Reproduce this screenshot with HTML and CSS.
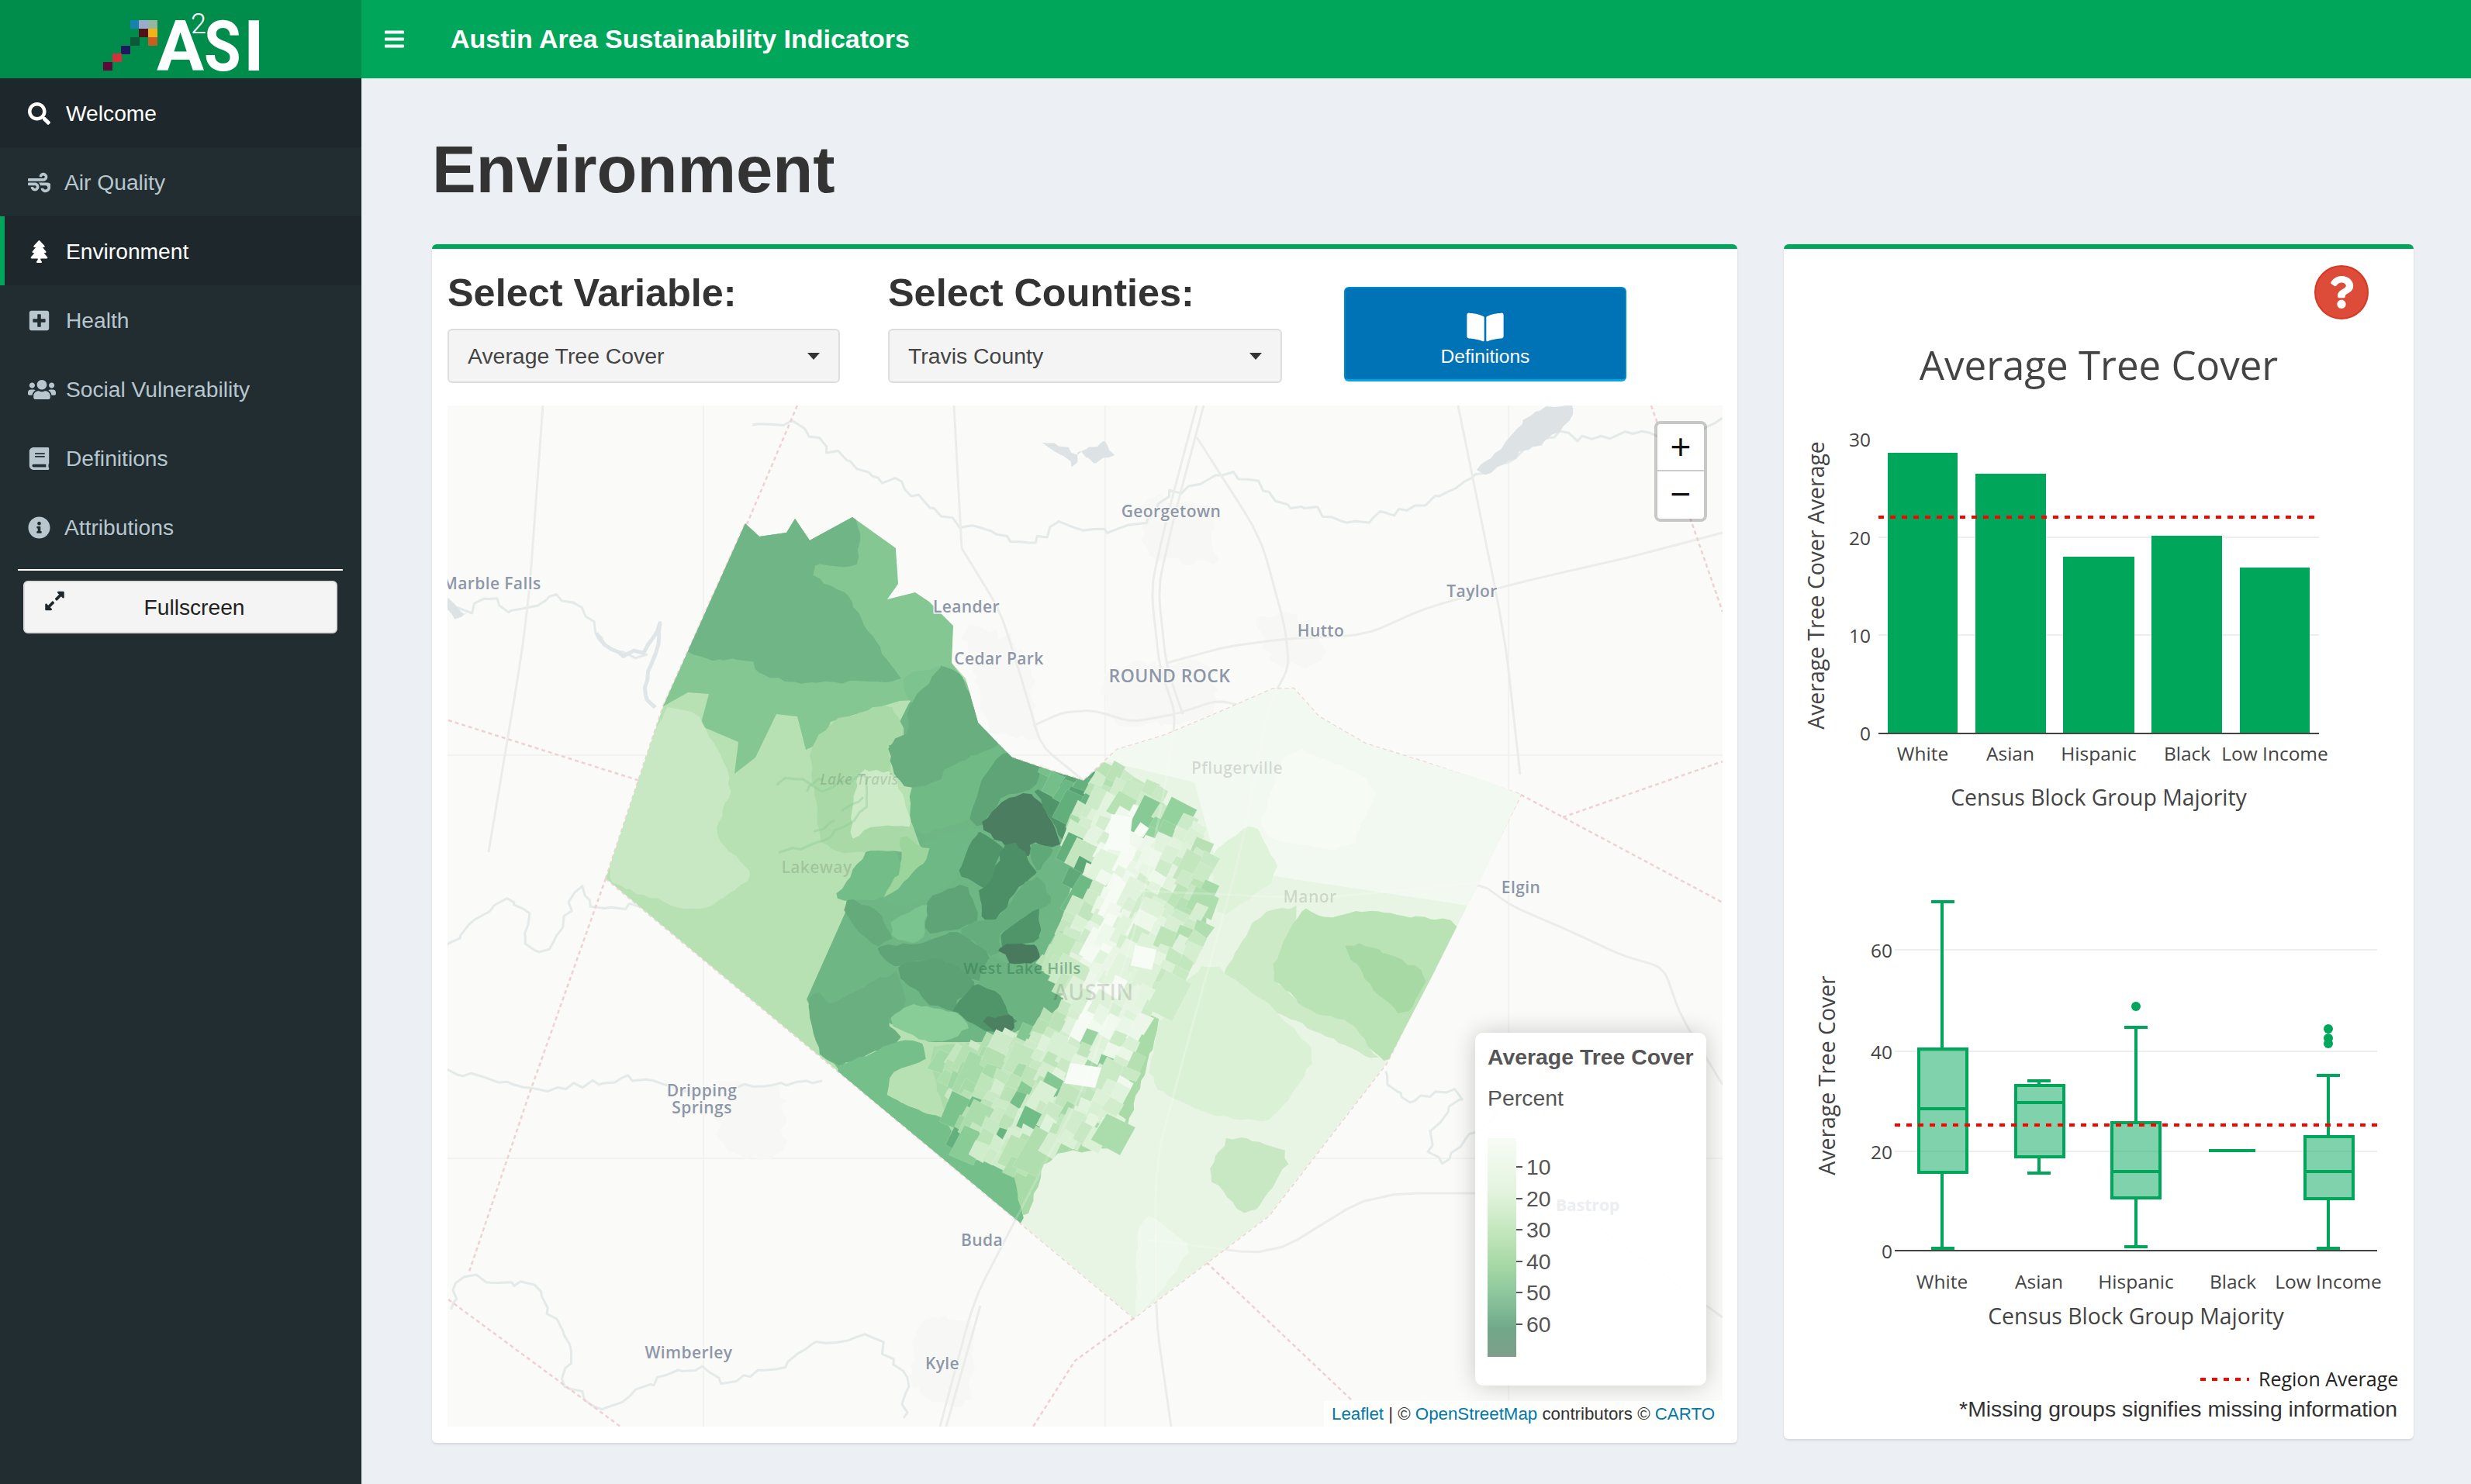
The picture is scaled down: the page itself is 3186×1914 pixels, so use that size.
FILE: index.html
```html
<!DOCTYPE html>
<html lang="en">
<head>
    <meta charset="UTF-8">
    <meta name="viewport" content="width=device-width, initial-scale=1.0">
    <title>Austin Area Sustainability Indicators</title>
    <link rel="stylesheet" href="styles.css">
</head>
<body>
    <div class="app">
        <a class="logo" href="#">
            <svg class="logo-art" viewBox="0 0 466 101">
                <rect x="168" y="26" width="12" height="11" fill="#1583ab"/>
                <rect x="179" y="26" width="12" height="11" fill="#9aaccd"/>
                <rect x="191" y="26" width="12" height="11" fill="#95b6a0"/>
                <rect x="179" y="37" width="12" height="11" fill="#4e1414"/>
                <rect x="191" y="37" width="12" height="11" fill="#f3b11a"/>
                <rect x="168" y="48" width="12" height="11" fill="#0d5a3a"/>
                <rect x="191" y="48" width="12" height="11" fill="#c85e22"/>
                <rect x="156" y="59" width="12" height="11" fill="#1c1a5c"/>
                <rect x="145" y="69" width="12" height="11" fill="#d5313a"/>
                <rect x="133" y="80" width="12" height="11" fill="#5c0a3c"/>
                <text class="logo-letter" x="202" y="91">A</text>
                <text class="logo-letter" transform="translate(263 91) scale(0.85 1)">S</text>
                <text class="logo-letter" x="314" y="91">I</text>
                <text class="logo-two" x="246" y="43">2</text>
            </svg>
        </a>
        <header class="navbar">
            <svg class="nav-toggle" viewBox="0 0 448 512"><path d="M16 132h416c8.837 0 16-7.163 16-16V76c0-8.837-7.163-16-16-16H16C7.163 60 0 67.163 0 76v40c0 8.837 7.163 16 16 16zm0 160h416c8.837 0 16-7.163 16-16v-40c0-8.837-7.163-16-16-16H16c-8.837 0-16 7.163-16 16v40c0 8.837 7.163 16 16 16zm0 160h416c8.837 0 16-7.163 16-16v-40c0-8.837-7.163-16-16-16H16c-8.837 0-16 7.163-16 16v40c0 8.837 7.163 16 16 16z"/></svg>
            <span class="nav-title">Austin Area Sustainability Indicators</span>
        </header>

        <aside class="sidebar">
            <ul class="menu">
                <li class="menu-item is-hover">
                    <svg class="menu-icon" viewBox="0 0 512 512"><path d="M505 442.7L405.3 343c-4.5-4.5-10.6-7-17-7H372c27.6-35.3 44-79.7 44-128C416 93.1 322.9 0 208 0S0 93.1 0 208s93.1 208 208 208c48.3 0 92.7-16.4 128-44v16.3c0 6.4 2.5 12.5 7 17l99.7 99.7c9.4 9.4 24.6 9.4 33.9 0l28.3-28.3c9.4-9.4 9.4-24.6.1-34zM208 336c-70.7 0-128-57.2-128-128 0-70.7 57.2-128 128-128 70.7 0 128 57.2 128 128 0 70.7-57.2 128-128 128z"/></svg>
                    Welcome
                </li>
                <li class="menu-item">
                    <svg class="menu-icon menu-icon-tight" viewBox="0 0 512 512"><path d="M156.7 256H16c-8.800 0-16 7.200-16 16v32c0 8.800 7.200 16 16 16h142.200c15.900 0 30.800 10.900 33.400 26.600 3.300 20-12.100 37.400-31.600 37.400-14.100 0-26.100-9.200-30.400-21.900-2.100-6.300-8.600-10.100-15.200-10.100H81.600c-9.800 0-17.700 8.800-15.900 18.400 8.600 44.100 47.600 77.600 94.200 77.600 57.100 0 102.700-50.100 95.200-108.600C249 291 205.400 256 156.700 256zM16 224h336c59.700 0 106.800-54.800 93.800-116.700-7.600-36.200-36.900-65.500-73.100-73.100-55.400-11.600-105.100 24.900-114.900 75.500-1.900 9.600 6.100 18.300 15.800 18.300h32.800c6.700 0 13.100-3.800 15.200-10.100C325.900 105.200 337.900 96 352 96c19.400 0 34.900 17.400 31.600 37.400-2.600 15.700-17.400 26.600-33.400 26.600H16c-8.800 0-16 7.200-16 16v32c0 8.800 7.200 16 16 16zm384 32H243.700c19.300 16.600 33.200 38.800 39.800 64H400c26.500 0 48 21.500 48 48s-21.500 48-48 48c-17.900 0-33.300-9.900-41.600-24.400-2.900-5-8.700-7.600-14.500-7.600h-33.800c-10.900 0-19 10.800-15.300 21.100 17.800 50.600 70.500 84.800 129.400 72.300 41.200-8.700 75.100-41.600 84.700-82.700C560.100 271.900 490.500 256 400 256z"/></svg>
                    Air Quality
                </li>
                <li class="menu-item is-active">
                    <svg class="menu-icon" viewBox="0 0 384 512"><path d="M378.310 378.490L298.420 288h30.630c9.010 0 16.980-5 20.780-13.060 3.800-8.040 2.550-17.260-3.280-24.050L268.420 160h28.890c9.100 0 17.300-5.350 20.860-13.610 3.520-8.130 1.860-17.590-4.240-24.080L203.660 4.830c-6.030-6.450-17.280-6.450-23.320 0L70.060 122.310c-6.100 6.490-7.750 15.950-4.240 24.080C69.390 154.650 77.590 160 86.690 160h28.890l-78.140 90.910c-5.810 6.780-7.060 15.990-3.270 24.040C37.970 283 45.930 288 54.950 288h30.630L5.690 378.490c-6 6.790-7.360 16.090-3.560 24.260 3.750 8.050 12 13.250 21.010 13.250H160v24.450l-30.290 48.400c-5.320 10.640 2.420 23.160 14.310 23.160h95.960c11.890 0 19.630-12.520 14.310-23.160L224 440.450V416h136.860c9.010 0 17.260-5.200 21.010-13.250 3.800-8.170 2.440-17.470-3.560-24.260z"/></svg>
                    Environment
                </li>
                <li class="menu-item">
                    <svg class="menu-icon" viewBox="0 0 448 512"><path d="M400 32H48C21.500 32 0 53.500 0 80v352c0 26.500 21.500 48 48 48h352c26.500 0 48-21.500 48-48V80c0-26.500-21.500-48-48-48zm-32 252c0 6.600-5.400 12-12 12h-92v92c0 6.600-5.400 12-12 12h-56c-6.600 0-12-5.400-12-12v-92H92c-6.600 0-12-5.400-12-12v-56c0-6.600 5.400-12 12-12h92v-92c0-6.600 5.400-12 12-12h56c6.600 0 12 5.400 12 12v92h92c6.600 0 12 5.400 12 12v56z"/></svg>
                    Health
                </li>
                <li class="menu-item">
                    <svg class="menu-icon menu-icon-wide" viewBox="0 0 640 512"><path d="M96 224c35.300 0 64-28.700 64-64s-28.700-64-64-64-64 28.700-64 64 28.700 64 64 64zm448 0c35.300 0 64-28.700 64-64s-28.700-64-64-64-64 28.700-64 64 28.700 64 64 64zm32 32h-64c-17.600 0-33.500 7.100-45.100 18.600 40.300 22.100 68.900 62 75.100 109.400h66c17.700 0 32-14.300 32-32v-32c0-35.300-28.700-64-64-64zm-256 0c61.900 0 112-50.100 112-112S381.900 32 320 32 208 82.100 208 144s50.100 112 112 112zm76.800 32h-8.300c-20.800 10-43.900 16-68.500 16s-47.600-6-68.500-16h-8.300C179.600 288 128 339.600 128 403.200V432c0 26.500 21.500 48 48 48h288c26.500 0 48-21.500 48-48v-28.800c0-63.600-51.600-115.200-115.200-115.200zm-223.700-13.400C161.500 263.100 145.600 256 128 256H64c-35.300 0-64 28.700-64 64v32c0 17.700 14.300 32 32 32h65.900c6.300-47.400 34.900-87.300 75.200-109.400z"/></svg>
                    Social Vulnerability
                </li>
                <li class="menu-item">
                    <svg class="menu-icon" viewBox="0 0 448 512"><path d="M448 360V24c0-13.300-10.700-24-24-24H96C43 0 0 43 0 96v320c0 53 43 96 96 96h328c13.300 0 24-10.700 24-24v-16c0-7.500-3.500-14.300-8.900-18.700-4.200-15.400-4.200-59.300 0-74.700 5.400-4.300 8.900-11.100 8.900-18.600zM128 134c0-3.300 2.700-6 6-6h212c3.300 0 6 2.700 6 6v20c0 3.300-2.700 6-6 6H134c-3.300 0-6-2.700-6-6v-20zm0 64c0-3.300 2.700-6 6-6h212c3.300 0 6 2.700 6 6v20c0 3.300-2.700 6-6 6H134c-3.300 0-6-2.700-6-6v-20zm253.400 250H96c-17.700 0-32-14.300-32-32 0-17.600 14.400-32 32-32h285.400c-1.900 17.100-1.900 46.900 0 64z"/></svg>
                    Definitions
                </li>
                <li class="menu-item">
                    <svg class="menu-icon menu-icon-tight" viewBox="0 0 512 512"><path d="M256 8C119.043 8 8 119.083 8 256c0 136.997 111.043 248 248 248s248-111.003 248-248C504 119.083 392.957 8 256 8zm0 110c23.196 0 42 18.804 42 42s-18.804 42-42 42-42-18.804-42-42 18.804-42 42-42zm56 254c0 6.627-5.373 12-12 12h-88c-6.627 0-12-5.373-12-12v-24c0-6.627 5.373-12 12-12h12v-64h-12c-6.627 0-12-5.373-12-12v-24c0-6.627 5.373-12 12-12h64c6.627 0 12 5.373 12 12v100h12c6.627 0 12 5.373 12 12v24z"/></svg>
                    Attributions
                </li>
            </ul>
            <hr class="side-rule">
            <button class="fullscreen-btn" type="button">
                <svg class="fullscreen-icon" viewBox="0 0 448 512"><path d="M212.686 315.314L120 408l32.922 31.029c15.120 15.120 4.412 40.971-16.970 40.971h-112C10.697 480 0 469.255 0 456V344c0-21.382 25.803-32.090 40.922-16.971L72 360l92.686-92.686c6.248-6.248 16.379-6.248 22.627 0l25.373 25.373c6.249 6.248 6.249 16.378 0 22.627zm22.628-118.628L328 104l-32.922-31.029C279.958 57.851 290.666 32 312.048 32h112C437.303 32 448 42.745 448 56v112c0 21.382-25.803 32.090-40.922 16.971L376 152l-92.686 92.686c-6.248 6.248-16.379 6.248-22.627 0l-25.373-25.373c-6.249-6.248-6.249-16.378 0-22.627z"/></svg>
                <span class="fullscreen-label">Fullscreen</span>
            </button>
        </aside>

        <main class="content">
            <h1 class="page-title">Environment</h1>
            <div class="cards">
                <section class="card map-card">
                    <div class="controls">
                        <div class="control">
                            <h2 class="control-title">Select Variable:</h2>
                            <div class="select-box">Average Tree Cover</div>
                        </div>
                        <div class="control">
                            <h2 class="control-title">Select Counties:</h2>
                            <div class="select-box">Travis County</div>
                        </div>
                        <button class="definitions-btn" type="button">
                            <svg class="definitions-icon" viewBox="0 0 576 512"><path d="M542.220 32.050c-54.800 3.110-163.720 14.430-230.960 55.590-4.640 2.840-7.270 7.890-7.270 13.170v363.870c0 11.550 12.630 18.850 23.280 13.490 69.180-34.820 169.230-44.320 218.700-46.920 16.890-.89 30.020-14.430 30.020-30.660V62.750c.01-17.710-15.350-31.740-33.770-30.700zM264.730 87.640C197.500 46.480 88.580 35.170 33.780 32.050 15.360 31.010 0 45.040 0 62.750V400.600c0 16.240 13.130 29.780 30.020 30.660 49.490 2.600 149.590 12.110 218.770 46.950 10.620 5.350 23.210-1.940 23.210-13.460V100.630c0-5.290-2.620-10.130-7.270-12.990z"/></svg>
                            Definitions
                        </button>
                    </div>

                    <div class="map">
                        <svg class="map-canvas" viewBox="577 524 1644 1317">
                            <defs>
                                <clipPath id="county-clip">
                                    <polygon points="961,676 979,693 1014,688 1025,670 1044,698 1099,668 1155,708 1158,754 1144,774 1180,765 1198,777 1229,808 1227,856 1245,876 1261,933 1288,961 1305,978 1340,990 1397,1008 1415,992 1440,968 1500,950 1560,925 1640,890 1668,889 1700,925 1760,960 1840,985 1920,1010 1961,1026 1907,1139 1847,1259 1788,1372 1636,1569 1462,1701 1308,1572 781,1134 855,912"/>
                                </clipPath>
                            </defs>

                            <!-- tile seams -->
                            <g class="tile-seam">
                                <path d="M907 524V1841M1425 524V1841M1945 524V1841M577 975H2221M577 1495H2221"/>
                            </g>

                            <!-- built up areas -->
                            <g class="town" data-rough="6">
                                <polygon points="1240,800 1320,830 1345,960 1270,940"/>
                                <polygon points="1470,640 1560,650 1570,730 1480,720"/>
                                <polygon points="1420,860 1560,850 1570,930 1430,940"/>
                                <polygon points="1620,790 1700,800 1710,860 1640,860"/>
                                <polygon points="920,1400 1010,1400 1010,1500 930,1490"/>
                                <polygon points="1180,1700 1260,1700 1250,1820 1175,1800"/>
                                <polygon points="2040,1420 2120,1420 2110,1500 2050,1490"/>
                            </g>

                            <!-- water -->
                            <g class="river" data-wiggle="5">
                                <path d="M974 545L1028 545 1060 575 1126 616 1165 625 1191 647 1245 682 1280 685 1321 703 1342 692 1364 675 1400 688 1473 680 1490 655 1505 637 1540 628 1581 611 1625 626 1650 650 1690 657 1730 672 1766 670 1800 660 1841 647 1880 625 1917 606 1950 596 2000 560 2060 570 2110 555 2160 570 2221 540"/>
                                <path d="M578 785L600 790 627 772 645 775 659 792 690 785 713 767 740 775 757 790 768 820 800 846 835 845"/>
                                <path d="M578 1225L610 1190 630 1170 648 1160 670 1170 686 1186 670 1217 703 1233 725 1190 746 1144 760 1170 773 1175 822 1170 850 1190"/>
                                <path d="M578 1385L638 1390 681 1411 750 1400 822 1390 870 1405 909 1411 980 1400 1060 1395"/>
                                <path d="M578 1688L590 1660 605 1646 650 1660 692 1657 710 1700 741 1740 724 1782 760 1810 789 1819 830 1790 865 1772 900 1765 940 1785 974 1772 1005 1770 1028 1745 1075 1730 1126 1719 1145 1750 1169 1782 1165 1830"/>
                                <path d="M1787 1385L1800 1410 1820 1426 1860 1405 1885 1416 1850 1450 1841 1484 1860 1500 1890 1470 1940 1430"/>
                            </g>
                            <g class="lake" data-rough="3">
                                <polygon points="1342,572 1362,582 1383,602 1392,596 1390,584 1404,590 1412,598 1436,590 1432,578 1424,570 1416,575 1404,578 1385,586 1365,574"/>
                                <polygon points="2000,524 2032,524 2022,545 1992,572 1972,578 1950,592 1915,612 1905,604 1935,582 1958,552 1975,534"/>
                                <polygon points="578,770 596,792 606,784 590,800 578,790"/>
                            </g>
                            <g class="lake-arm" data-wiggle="3">
                                <path d="M768 820L800 846 835 840 852 800 846 840 835 860 832 905 845 910"/>
                            </g>

                            <!-- roads -->
                            <g class="road" data-smooth="2">
                                <path d="M1543 524L1505 667 1484 759 1495 861 1516 922 1505 1000 1470 1180 1400 1400 1310 1573 1256 1677 1212 1841"/>
                                <path d="M1552 524L1514 667 1493 759 1504 861 1525 922"/>
                                <path d="M1264 1685L1220 1841"/>
                                <path d="M1543 565L1625 693 1657 810 1662 861 1635 912 1600 1100 1530 1350 1490 1500 1490 1700 1510 1841"/>
                                <path d="M1240 708L1290 790 1320 886 1342 963 1400 1010"/>
                                <path d="M1332 937L1370 920 1408 917 1460 932 1516 922 1570 904 1625 917"/>
                                <path d="M1505 856L1581 835 1657 825 1760 820 1841 784 1972 749 2100 720 2221 688"/>
                                <path d="M1470 1150L1700 1160 1907 1139 1950 1170 2020 1200 2091 1233 2145 1249 2167 1311 2221 1400"/>
                                <path d="M1230 524L1240 708"/>
                                <path d="M700 524L680 800 630 1100"/>
                                <path d="M1880 524L1940 820 1960 1000"/>
                                <path d="M1480 1600L1640 1620 1770 1540 2000 1540 2221 1700"/>
                            </g>

                            <!-- county lines -->
                            <g class="county-line">
                                <path d="M1028 524L963 677"/>
                                <path d="M781 1134L681 1416 605 1641"/>
                                <path d="M578 930L844 1014"/>
                                <path d="M2129 524L2221 790"/>
                                <path d="M2015 1055L2221 983"/>
                                <path d="M1961 1026L2221 1165"/>
                                <path d="M578 1677L800 1841"/>
                                <path d="M1549 1623L1744 1808"/>
                                <path d="M1462 1701L1386 1756 1332 1841"/>
                                <path d="M781 1134L855 912 961 676"/>
                                <path d="M781 1134L1308 1572 1462 1701 1636 1569 1788 1372 1961 1026"/>
                                <path d="M1305 978L1340 990 1397 1008 1440 968 1500 950 1560 925 1640 890 1668 889 1700 925 1760 960 1840 985 1961 1026"/>
                            </g>

                            <!-- tree cover by block group -->
                            <g clip-path="url(#county-clip)">
                                <rect x="577" y="524" width="1644" height="1317" fill="#e8f5e4"/>
                                <polygon fill="#f2f9f0" points="1290,950 1660,860 1980,1000 1900,1170 1570,1120 1540,1010"/>
                                <polygon fill="#b7e0b3" points="781,1134 855,912 961,676 1099,668 1397,979 1440,1200 1380,1400 1308,1572"/>
                                <polygon fill="#85c792" points="950,670 1105,660 1155,708 1158,754 1144,774 1180,765 1198,777 1229,808 1227,856 1260,900 1160,905 1071,932 1061,958 1039,968 1028,925 1001,922 974,978 947,999 952,958 903,937 914,896 887,894 850,915"/>
                                <polygon fill="#6eb684" points="1145,962 1172,908 1214,859 1262,921 1345,985 1380,1060 1385,1130 1368,1190 1345,1240 1375,1290 1340,1320 1300,1345 1200,1345 1143,1319 1085,1377 1040,1290 1089,1180 1116,1100 1170,1080 1190,1040"/>
                            </g>
                            <g id="blocks" clip-path="url(#county-clip)" data-rough="2">
                                <polygon fill="#f6fbf4" points="1660,960 1780,1010 1740,1100 1620,1080"/>
                                <polygon fill="#dff2da" points="1560,1100 1620,1060 1650,1130 1570,1190"/>
                                <polygon fill="#c8e8c3" points="770,1134 855,912 900,920 945,1010 920,1080 975,1130 900,1180"/>
                                <polygon fill="#6fb585" points="950,670 979,688 1014,684 1025,660 1044,694 1099,660 1109,693 1104,734 1050,728 1050,744 1093,769 1120,815 1147,856 1164,879 1061,881 1017,881 979,871 968,853 909,851 880,841"/>
                                <polygon fill="#a8d9a6" points="1071,932 1147,907 1164,938 1169,958 1142,963 1153,1014 1180,1070 1190,1100 1060,1100 1050,1014 1044,968"/>
                                <polygon fill="#cdeac7" points="1107,993 1152,997 1179,1069 1129,1064 1094,1087"/>
                                <polygon fill="#7dc38f" points="1172,870 1214,859 1245,876 1205,900 1172,908 1164,880"/>
                                <polygon fill="#68ae7e" points="1145,962 1172,944 1172,908 1201,877 1214,859 1241,872 1262,921 1292,961 1219,993 1214,1006 1170,1020 1152,997"/>
                                <polygon fill="#6fba85" points="1288,961 1295,968 1263,1051 1250,1060 1179,1078 1170,1020 1214,1006 1219,993"/>
                                <polygon fill="#5ea476" points="1295,968 1345,985 1335,1020 1295,1026 1263,1069 1250,1055 1268,1002"/>
                                <polygon fill="#4b7d60" points="1263,1069 1295,1029 1335,1024 1370,1087 1353,1093 1330,1087 1328,1109 1295,1091"/>
                                <polygon fill="#4f9569" points="1335,1024 1337,1020 1373,1037 1373,1082 1370,1087"/>
                                <polygon fill="#4f9569" points="1257,1073 1295,1091 1286,1113 1279,1136 1268,1147 1234,1127 1241,1109"/>
                                <polygon fill="#4c8f66" points="1295,1091 1313,1089 1328,1113 1339,1127 1319,1140 1286,1185 1268,1187 1261,1154 1279,1136 1286,1113"/>
                                <polygon fill="#5fa979" points="1328,1087 1353,1093 1357,1098 1339,1127 1328,1113"/>
                                <polygon fill="#6db885" points="1248,1069 1263,1069 1234,1127 1234,1136 1179,1171 1152,1167 1136,1162 1147,1140 1201,1096 1185,1089"/>
                                <polygon fill="#9bd59b" points="1161,1078 1203,1100 1152,1154 1136,1158 1147,1140 1163,1113"/>
                                <polygon fill="#73bd88" points="1116,1100 1158,1100 1161,1122 1136,1162 1080,1162 1080,1154"/>
                                <polygon fill="#64aa7b" points="1092,1158 1134,1176 1152,1212 1129,1221 1112,1207 1089,1180"/>
                                <polygon fill="#7ac48f" points="1147,1189 1196,1163 1192,1207 1183,1218 1152,1212"/>
                                <polygon fill="#5ea476" points="1196,1158 1246,1140 1263,1185 1250,1194 1234,1200 1192,1207"/>
                                <polygon fill="#65ad7d" points="1263,1187 1286,1185 1321,1140 1339,1131 1357,1162 1339,1176 1290,1203 1290,1229 1277,1234 1234,1200"/>
                                <polygon fill="#4f9569" points="1290,1205 1319,1185 1341,1171 1341,1216 1290,1223"/>
                                <polygon fill="#6fb885" points="1341,1180 1366,1194 1357,1225 1341,1234"/>
                                <polygon fill="#5ea476" points="1129,1221 1183,1218 1234,1200 1277,1234 1259,1270 1210,1234 1156,1247 1143,1240"/>
                                <polygon fill="#6cb382" points="1277,1234 1304,1245 1326,1245 1341,1234 1365,1245 1375,1290 1340,1320 1312,1319 1286,1283 1259,1270"/>
                                <polygon fill="#4a7a5e" points="1288,1225 1299,1218 1321,1220 1335,1218 1341,1234 1326,1245 1304,1245 1295,1232"/>
                                <polygon fill="#5ba173" points="1156,1247 1210,1234 1241,1252 1259,1270 1232,1296 1228,1305 1196,1296 1183,1279 1161,1265"/>
                                <polygon fill="#4f9569" points="1232,1296 1259,1270 1286,1283 1304,1310 1312,1319 1286,1334 1268,1328 1228,1305"/>
                                <polygon fill="#4c8060" points="1268,1314 1304,1310 1310,1323 1295,1337 1277,1330"/>
                                <polygon fill="#69af7f" points="1040,1290 1056,1279 1068,1296 1080,1290 1098,1282 1110,1276 1134,1261 1147,1261 1156,1252 1170,1296 1143,1319 1163,1343 1085,1377 1060,1363 1049,1341"/>
                                <polygon fill="#88cd97" points="1170,1296 1228,1305 1250,1323 1232,1341 1192,1346 1143,1319"/>
                                <polygon fill="#74bf8a" points="1070,1381 1161,1343 1192,1346 1192,1368 1147,1386 1143,1417 1237,1453 1246,1515 1134,1430"/>
                                <polygon fill="#74bf8a" points="1050,1350 1085,1377 1143,1417 1237,1453 1300,1480 1322,1580 1290,1580"/>
                                <polygon fill="#a9dba8" points="1190,1350 1280,1345 1340,1320 1400,1280 1500,1270 1490,1340 1445,1480 1350,1490 1322,1580 1300,1490 1240,1500"/>
                                <polygon fill="#a9dba8" points="1522,1127 1554,1087 1558,1176 1547,1225 1504,1189 1513,1154"/>
                                <polygon fill="#cdeac7" points="1570,1270 1625,1176 1679,1170 1635,1259 1690,1306 1744,1317 1782,1374 1679,1322 1625,1301"/>
                                <polygon fill="#b9e2b5" points="1635,1259 1679,1170 1711,1186 1755,1176 1890,1190 1855,1259 1790,1380 1739,1317 1690,1306"/>
                                <polygon fill="#a7d9a5" points="1733,1223 1755,1217 1845,1257 1810,1315 1766,1270"/>
                                <polygon fill="#dbf1d6" points="1500,1290 1560,1240 1640,1300 1700,1360 1640,1450 1560,1440 1480,1400"/>
                                <polygon fill="#c8e8c3" points="1587,1463 1668,1489 1612,1575 1554,1515"/>
                                <polygon fill="#eff8ec" points="1470,1560 1540,1610 1500,1660 1462,1710"/>
                            </g>
                            <g class="lake-fingers" clip-path="url(#county-clip)" data-wiggle="3">
                                <path d="M1000 1010L1030 1004 1060 1022 1090 1010 1118 1000 1120 1040 1085 1070 1050 1090 1005 1100"/>
                                <path d="M1040 1020L1060 1006"/>
                                <path d="M1085 1045L1112 1030"/>
                                <path d="M1050 1075L1075 1060"/>
                            </g>
                            <g id="mosaic" clip-path="url(#county-clip)"></g>

                            <!-- roads seen through the fill -->
                            <g class="road-over" clip-path="url(#county-clip)" data-smooth="2">
                                <path d="M1516 922L1505 1000 1470 1180 1400 1400 1310 1573"/>
                                <path d="M1662 861L1635 912 1600 1100 1530 1350 1490 1500 1490 1700"/>
                                <path d="M1470 1150L1700 1160 1907 1139"/>
                                <path d="M1480 1600L1640 1620 1770 1540"/>
                            </g>

                            <!-- place names -->
                            <text class="place" x="1510" y="668">Georgetown</text>
                            <text class="place" x="634" y="761">Marble Falls</text>
                            <text class="place" x="1246" y="791">Leander</text>
                            <text class="place" x="1288" y="858">Cedar Park</text>
                            <text class="place place-big" x="1508" y="881">ROUND ROCK</text>
                            <text class="place" x="1898" y="771">Taylor</text>
                            <text class="place" x="1703" y="822">Hutto</text>
                            <text class="place" x="1961" y="1153">Elgin</text>
                            <text class="place" x="905" y="1415">Dripping</text>
                            <text class="place" x="905" y="1437">Springs</text>
                            <text class="place" x="1266" y="1608">Buda</text>
                            <text class="place" x="888" y="1753">Wimberley</text>
                            <text class="place" x="1215" y="1767">Kyle</text>
                            <text class="place place-over" x="1595" y="999">Pflugerville</text>
                            <text class="place place-over" x="1689" y="1165">Manor</text>
                            <text class="place place-over place-lake" x="1108" y="1013">Lake Travis</text>
                            <text class="place place-over" x="1053" y="1127">Lakeway</text>
                            <text class="place place-hills" x="1318" y="1257">West Lake Hills</text>
                            <text class="place place-city" x="1410" y="1291">AUSTIN</text>
                        </svg>

                        <div class="zoom-control">
                            <span class="zoom-btn">+</span>
                            <span class="zoom-btn">−</span>
                        </div>

                        <div class="legend">
                            <div class="legend-title">Average Tree Cover</div>
                            <div class="legend-unit">Percent</div>
                            <div class="legend-scale">
                                <div class="legend-bar"></div>
                                <ul class="legend-ticks">
                                    <li>10</li>
                                    <li>20</li>
                                    <li>30</li>
                                    <li>40</li>
                                    <li>50</li>
                                    <li>60</li>
                                </ul>
                            </div>
                            <span class="legend-ghost">Bastrop</span>
                        </div>

                        <div class="attribution">
                            <a href="#">Leaflet</a> | © <a href="#">OpenStreetMap</a> contributors © <a href="#">CARTO</a>
                        </div>
                    </div>
                </section>

                <section class="card chart-card">
                    <div class="help-row">
                        <button class="help-btn" type="button">
                            <svg class="help-icon" viewBox="0 0 384 512"><path d="M202.021 0C122.202 0 70.503 32.703 29.914 91.026c-7.363 10.580-5.093 25.086 5.178 32.874l43.138 32.709c10.373 7.865 25.132 6.026 33.253-4.148 25.049-31.381 43.630-49.449 82.757-49.449 30.764 0 68.816 19.799 68.816 49.631 0 22.552-18.617 34.134-48.993 51.164-35.423 19.860-82.299 44.576-82.299 106.405V320c0 13.255 10.745 24 24 24h72.471c13.255 0 24-10.745 24-24v-5.773c0-42.860 125.268-44.645 125.268-160.627C377.504 66.256 286.902 0 202.021 0zM192 373.459c-38.196 0-69.271 31.075-69.271 69.271 0 38.195 31.075 69.270 69.271 69.270s69.271-31.075 69.271-69.271-31.075-69.270-69.271-69.270z"/></svg>
                        </button>
                    </div>

                    <svg class="bar-chart" viewBox="2300 430 812 630">
                        <text class="chart-title" x="2706" y="490">Average Tree Cover</text>
                        <path class="grid" d="M2422 693H2990M2422 819H2990"/>
                        <rect class="bar" x="2434" y="584" width="90" height="362"/>
                        <rect class="bar" x="2547" y="611" width="91" height="335"/>
                        <rect class="bar" x="2660" y="718" width="92" height="228"/>
                        <rect class="bar" x="2774" y="691" width="91" height="255"/>
                        <rect class="bar" x="2888" y="732" width="90" height="214"/>
                        <path class="axis" d="M2422 946H2990"/>
                        <path class="avg" d="M2422 667H2990"/>
                        <text class="tick tick-y" x="2412" y="576">30</text>
                        <text class="tick tick-y" x="2412" y="703">20</text>
                        <text class="tick tick-y" x="2412" y="829">10</text>
                        <text class="tick tick-y" x="2412" y="955">0</text>
                        <text class="tick" x="2479" y="981">White</text>
                        <text class="tick" x="2592" y="981">Asian</text>
                        <text class="tick" x="2706" y="981">Hispanic</text>
                        <text class="tick" x="2820" y="981">Black</text>
                        <text class="tick" x="2933" y="981">Low Income</text>
                        <text class="axis-title" x="2706" y="1039">Census Block Group Majority</text>
                        <text class="axis-title" transform="translate(2352 755) rotate(-90)">Average Tree Cover Average</text>
                    </svg>

                    <svg class="box-chart" viewBox="2300 1130 812 670">
                        <path class="grid" d="M2443 1225H3065M2443 1356H3065M2443 1485H3065"/>
                        <path class="axis" d="M2443 1613H3065"/>

                        <path class="whisker" d="M2504 1163V1353M2504 1512V1610M2490 1163H2520M2490 1610H2520"/>
                        <rect class="box" x="2474" y="1353" width="62" height="159"/>
                        <path class="whisker" d="M2474 1430H2536"/>

                        <path class="whisker" d="M2629 1394V1400M2629 1492V1513M2614 1394H2644M2614 1513H2644"/>
                        <rect class="box" x="2599" y="1400" width="62" height="92"/>
                        <path class="whisker" d="M2599 1422H2661"/>

                        <path class="whisker" d="M2754 1325V1448M2754 1545V1608M2739 1325H2769M2739 1608H2769"/>
                        <rect class="box" x="2723" y="1448" width="62" height="97"/>
                        <path class="whisker" d="M2723 1511H2785"/>
                        <circle class="outlier" cx="2754" cy="1298" r="6"/>

                        <path class="whisker" d="M2848 1484H2908"/>

                        <path class="whisker" d="M3002 1387V1466M3002 1546V1610M2987 1387H3017M2987 1610H3017"/>
                        <rect class="box" x="2972" y="1466" width="62" height="80"/>
                        <path class="whisker" d="M2972 1511H3034"/>
                        <circle class="outlier" cx="3002" cy="1327" r="6"/>
                        <circle class="outlier" cx="3002" cy="1339" r="6"/>
                        <circle class="outlier" cx="3002" cy="1346" r="6"/>

                        <path class="avg" d="M2443 1451H3065"/>

                        <text class="tick tick-y" x="2440" y="1235">60</text>
                        <text class="tick tick-y" x="2440" y="1366">40</text>
                        <text class="tick tick-y" x="2440" y="1495">20</text>
                        <text class="tick tick-y" x="2440" y="1623">0</text>
                        <text class="tick" x="2504" y="1662">White</text>
                        <text class="tick" x="2629" y="1662">Asian</text>
                        <text class="tick" x="2754" y="1662">Hispanic</text>
                        <text class="tick" x="2879" y="1662">Black</text>
                        <text class="tick" x="3002" y="1662">Low Income</text>
                        <text class="axis-title" x="2754" y="1708">Census Block Group Majority</text>
                        <text class="axis-title" transform="translate(2366 1387) rotate(-90)">Average Tree Cover</text>

                        <path class="avg" d="M2837 1779H2900"/>
                        <text class="legend-name" x="2912" y="1788">Region Average</text>
                    </svg>

                    <p class="chart-note">*Missing groups signifies missing information</p>
                </section>
            </div>
        </main>
    </div>
    <script src="map.js"></script>
</body>
</html>
```

FILE: styles.css
```css
* {
    box-sizing: border-box;
}

body {
    margin: 0;
    font-family: "Liberation Sans", Arial, sans-serif;
    background-color: #ecf0f5;
    color: #333;
}

.app {
    display: grid;
    grid-template-columns: 466px 1fr;
    grid-template-rows: 101px 1fr;
    width: 3186px;
    height: 1914px;
    overflow: hidden;
}

/* header */
.logo {
    display: block;
    background-color: #008d4c;
}

.logo-art {
    display: block;
    width: 466px;
    height: 101px;
    overflow: visible;
}

.logo-letter {
    font-family: Roboto, sans-serif;
    font-size: 91px;
    font-weight: 700;
    fill: #fff;
}

.logo-two {
    font-family: Roboto, sans-serif;
    font-size: 36px;
    font-weight: 300;
    fill: #fff;
}

.navbar {
    display: flex;
    align-items: center;
    padding-left: 30px;
    background-color: #00a65a;
    color: #fff;
}

.nav-toggle {
    width: 25px;
    height: 29px;
    fill: #fff;
}

.nav-title {
    margin-left: 60px;
    font-size: 34px;
    font-weight: bold;
}

/* sidebar */
.sidebar {
    background-color: #222d32;
}

.menu {
    list-style: none;
    margin: 0;
    padding: 0;
}

.menu-item {
    display: flex;
    align-items: center;
    gap: 20px;
    height: 89px;
    padding-left: 36px;
    padding-top: 1px;
    font-size: 28.2px;
    color: #b8c7ce;
    fill: #b8c7ce;
}

.menu-item.is-hover {
    background-color: #1e282c;
    color: #fff;
    fill: #fff;
}

.menu-item.is-active {
    background-color: #1e282c;
    border-left: 6px solid #00a65a;
    padding-left: 30px;
    color: #fff;
    fill: #fff;
}

.menu-icon {
    flex: none;
    width: 29px;
    height: 29px;
}

.menu-icon-tight {
    margin-right: -2px;
}

.menu-icon-wide {
    width: 36px;
    margin-right: -7px;
}

.side-rule {
    width: 419px;
    height: 2px;
    margin: 10px 0 13px 23px;
    border: 0;
    background-color: #fff;
}

.fullscreen-btn {
    display: flex;
    align-items: center;
    width: 405px;
    height: 68px;
    margin-left: 30px;
    padding: 1px 15px 0 26px;
    background-color: #f4f4f4;
    border: 2px solid #ddd;
    border-radius: 6px;
    font-family: inherit;
    font-size: 28.2px;
    color: #222;
}

.fullscreen-icon {
    flex: none;
    width: 25px;
    height: 28px;
    margin-top: -18px;
    fill: #1e282c;
}

.fullscreen-label {
    flex: 1;
    text-align: center;
}

/* main area */
.content {
    padding: 0 74px 0 91px;
}

.page-title {
    margin: 0;
    height: 214px;
    padding-top: 53px;
    font-size: 85px;
    line-height: 130px;
    font-weight: bold;
    color: #333;
}

.cards {
    display: grid;
    grid-template-columns: 1683px 812px;
    gap: 60px;
    align-items: start;
}

.card {
    background: #fff;
    border-top: 6px solid #00a65a;
    border-radius: 6px;
    box-shadow: 0 2px 3px rgba(0, 0, 0, 0.1);
}

.map-card {
    height: 1546px;
    padding: 0 20px;
}

.controls {
    display: grid;
    grid-template-columns: 506px 508px 366px;
    column-gap: 62px;
    height: 202px;
}

.control-title {
    margin: 0;
    padding-top: 28px;
    height: 103px;
    font-size: 50.4px;
    line-height: 58px;
    font-weight: bold;
    color: #333;
}

.select-box {
    position: relative;
    height: 70px;
    padding-left: 24px;
    background-color: #f4f4f4;
    border: 2px solid #ddd;
    border-radius: 6px;
    font-size: 28.4px;
    line-height: 66px;
    color: #444;
}

.select-box::after {
    content: "";
    position: absolute;
    right: 24px;
    top: 29px;
    border-left: 8px solid transparent;
    border-right: 8px solid transparent;
    border-top: 9px solid #333;
}

.definitions-btn {
    display: flex;
    flex-direction: column;
    align-items: center;
    justify-content: flex-start;
    gap: 3px;
    width: 364px;
    height: 122px;
    margin: 49px 0 0 18px;
    padding: 29px 0 0;
    background-color: #0073b7;
    border: 2px solid #0089c9;
    border-bottom: 3px solid #00a7e0;
    border-radius: 6px;
    font-family: inherit;
    font-size: 24.6px;
    color: #fff;
}

.definitions-icon {
    width: 48px;
    height: 42px;
    fill: #fff;
}

/* map */
.map {
    position: relative;
    width: 1644px;
    height: 1317px;
    background-color: #fafaf8;
    overflow: hidden;
}

.map-canvas {
    display: block;
    width: 100%;
    height: 100%;
}

.tile-seam path {
    fill: none;
    stroke: #f0f0ee;
    stroke-width: 1.5;
}

.town polygon {
    fill: #f7f7f5;
}

.river path {
    fill: none;
    stroke: #e4e9ea;
    stroke-width: 3;
    stroke-linejoin: round;
}

.lake polygon {
    fill: #dde3e5;
}

.lake-arm path {
    fill: none;
    stroke: #e0e6e8;
    stroke-width: 5;
    stroke-linejoin: round;
}

.lake-fingers path {
    fill: none;
    stroke: #8ccb98;
    stroke-opacity: 0.4;
    stroke-width: 3;
    stroke-linecap: round;
}

.road path {
    fill: none;
    stroke: #ececea;
    stroke-width: 3;
    stroke-linejoin: round;
}

.road-over path {
    fill: none;
    stroke: #fff;
    stroke-opacity: 0.2;
    stroke-width: 3;
    stroke-linejoin: round;
}

.county-line path {
    fill: none;
    stroke: #eed2d1;
    stroke-width: 2.5;
    stroke-dasharray: 5 4;
}

#mosaic polygon {
    stroke-width: 0.6;
    stroke: rgba(255, 255, 255, 0.25);
}

.place {
    font-family: "Open Sans", sans-serif;
    font-size: 21px;
    font-weight: 600;
    letter-spacing: 0.4px;
    fill: #8d97a8;
    stroke: #fafaf8;
    stroke-width: 3px;
    paint-order: stroke;
    text-anchor: middle;
}

.place-big {
    font-size: 23px;
    font-weight: 600;
}

.place-over {
    fill: #000;
    fill-opacity: 0.14;
    stroke: none;
}

.place-lake {
    font-size: 19px;
    font-style: italic;
}

.place-hills {
    font-size: 20px;
    fill: #2f7a50;
    fill-opacity: 0.5;
    stroke: none;
}

.place-city {
    font-size: 28px;
    fill: #000;
    fill-opacity: 0.13;
    stroke: none;
}

.zoom-control {
    position: absolute;
    top: 20px;
    right: 20px;
    display: flex;
    flex-direction: column;
    width: 68px;
    background: #fff;
    border: 4px solid rgba(0, 0, 0, 0.2);
    border-radius: 8px;
    background-clip: padding-box;
}

.zoom-btn {
    height: 61px;
    font-family: "Liberation Sans", sans-serif;
    font-size: 46px;
    line-height: 58px;
    text-align: center;
    color: #111;
}

.zoom-btn:first-child {
    border-bottom: 2px solid #ccc;
}

.legend {
    position: absolute;
    left: 1325px;
    top: 809px;
    width: 298px;
    height: 455px;
    padding: 15px 16px;
    background: rgba(255, 255, 255, 0.94);
    border-radius: 10px;
    box-shadow: 0 0 30px rgba(0, 0, 0, 0.2);
    font-size: 28.4px;
    color: #555;
}

.legend-ghost {
    position: absolute;
    left: 104px;
    top: 208px;
    font-family: "Open Sans", sans-serif;
    font-size: 21px;
    font-weight: 700;
    color: #eceef2;
}

.legend-title {
    font-weight: bold;
    line-height: 32px;
    white-space: nowrap;
}

.legend-unit {
    margin-top: 21px;
    line-height: 32px;
}

.legend-scale {
    display: flex;
    margin-top: 36px;
}

.legend-bar {
    width: 37px;
    height: 282px;
    background: linear-gradient(#f7fcf5 0%, #e3f3de 25%, #c4e7be 42%, #a8d9a6 57%, #8cc59c 72%, #70a98a 87%, #7f9e8a 100%);
}

.legend-ticks {
    position: relative;
    list-style: none;
    margin: 0;
    padding: 17px 0 0 0;
}

.legend-ticks li {
    display: flex;
    align-items: center;
    height: 40.5px;
    line-height: 40.5px;
}

.legend-ticks li::before {
    content: "";
    width: 8px;
    height: 2px;
    margin-right: 5px;
    background-color: #555;
}

.attribution {
    position: absolute;
    right: 0;
    bottom: 0;
    height: 33px;
    padding: 0 10px;
    background: rgba(255, 255, 255, 0.7);
    font-size: 22.3px;
    line-height: 33px;
    color: #333;
}

.attribution a {
    color: #0078a8;
    text-decoration: none;
}

/* charts */
.chart-card {
    height: 1541px;
}

.help-row {
    display: flex;
    justify-content: flex-end;
    height: 109px;
    padding: 21px 58px 0 0;
}

.help-btn {
    display: flex;
    align-items: center;
    justify-content: center;
    width: 70px;
    height: 70px;
    padding: 0;
    background-color: #dd4b39;
    border: 2px solid #d73925;
    border-radius: 50%;
}

.help-icon {
    width: 32px;
    height: 42px;
    fill: #fff;
}

.bar-chart {
    display: block;
    width: 812px;
    height: 630px;
}

.box-chart {
    display: block;
    width: 812px;
    height: 670px;
    margin-top: 70px;
}

.chart-title {
    font-family: "Open Sans", sans-serif;
    font-size: 51px;
    fill: #444;
    text-anchor: middle;
}

.tick {
    font-family: "Open Sans", sans-serif;
    font-size: 24.5px;
    fill: #444;
    text-anchor: middle;
}

.tick-y {
    text-anchor: end;
}

.axis-title {
    font-family: "Open Sans", sans-serif;
    font-size: 28.4px;
    fill: #444;
    text-anchor: middle;
}

.legend-name {
    font-family: "Open Sans", sans-serif;
    font-size: 25px;
    font-weight: 500;
    fill: #222;
}

.grid {
    fill: none;
    stroke: #eee;
    stroke-width: 2;
}

.axis {
    fill: none;
    stroke: #444;
    stroke-width: 2;
}

.avg {
    fill: none;
    stroke: #f00;
    stroke-width: 4;
    stroke-dasharray: 7 8;
}

.bar {
    fill: #00a65a;
}

.box {
    fill: rgba(0, 166, 90, 0.5);
    stroke: #00a65a;
    stroke-width: 4;
}

.whisker {
    fill: none;
    stroke: #00a65a;
    stroke-width: 4;
}

.outlier {
    fill: #00a65a;
}

.chart-note {
    margin: 0;
    padding-right: 21px;
    font-size: 28.4px;
    line-height: 34px;
    text-align: right;
    color: #333;
}
```

FILE: map.js
```js
// Map helpers: the shapes in index.html are coarse, this roughens them and
// fills in the small block groups of central and south Austin.
const mosaic = document.getElementById('mosaic');
const SVG_NS = 'http://www.w3.org/2000/svg';

// plain seeded random so the picture is the same each time
let seed = 20394;
function rand() {
    seed = (seed * 16807) % 2147483647;
    return seed / 2147483647;
}

function chaikin(points, closed) {
    const out = closed ? [] : [points[0]];
    const last = closed ? points.length : points.length - 1;
    for (let i = 0; i < last; i++) {
        const [ax, ay] = points[i];
        const [bx, by] = points[(i + 1) % points.length];
        out.push([ax * 0.85 + bx * 0.15, ay * 0.85 + by * 0.15]);
        out.push([ax * 0.15 + bx * 0.85, ay * 0.15 + by * 0.85]);
    }
    if (!closed) out.push(points[points.length - 1]);
    return out;
}

function jitter(points, step, amount, closed) {
    const out = [];
    const last = closed ? points.length : points.length - 1;
    for (let i = 0; i < last; i++) {
        const [ax, ay] = points[i];
        const [bx, by] = points[(i + 1) % points.length];
        const n = Math.max(1, Math.round(Math.hypot(bx - ax, by - ay) / step));
        for (let k = 0; k < n; k++) {
            const t = k / n;
            out.push([
                ax + (bx - ax) * t + (rand() - 0.5) * amount * 2,
                ay + (by - ay) * t + (rand() - 0.5) * amount * 2
            ]);
        }
    }
    if (!closed) out.push(points[points.length - 1]);
    return out;
}

function toPairs(text) {
    const nums = text.match(/-?[\d.]+/g).map(Number);
    const pairs = [];
    for (let i = 0; i < nums.length; i += 2) pairs.push([nums[i], nums[i + 1]]);
    return pairs;
}

function pairsToString(points) {
    return points.map(([x, y]) => `${x.toFixed(1)},${y.toFixed(1)}`).join(' ');
}

function pairsToPath(points) {
    return 'M' + points.map(([x, y]) => `${x.toFixed(1)} ${y.toFixed(1)}`).join('L');
}

document.querySelectorAll('[data-rough]').forEach((group) => {
    const amount = Number(group.dataset.rough);
    group.querySelectorAll('polygon').forEach((poly) => {
        const pts = jitter(chaikin(toPairs(poly.getAttribute('points')), true), 9, amount, true);
        poly.setAttribute('points', pairsToString(pts));
    });
});

document.querySelectorAll('[data-wiggle]').forEach((group) => {
    const amount = Number(group.dataset.wiggle);
    group.querySelectorAll('path').forEach((path) => {
        const pts = jitter(chaikin(toPairs(path.getAttribute('d')), false), 11, amount, false);
        path.setAttribute('d', pairsToPath(pts));
    });
});

document.querySelectorAll('[data-smooth]').forEach((group) => {
    group.querySelectorAll('path').forEach((path) => {
        const pts = chaikin(chaikin(toPairs(path.getAttribute('d')), false), false);
        path.setAttribute('d', pairsToPath(pts));
    });
});

// city mosaic
const region = [
    [1340, 990], [1400, 985], [1470, 1005], [1560, 1085], [1555, 1230], [1500, 1295],
    [1460, 1380], [1440, 1470], [1380, 1475], [1300, 1510], [1236, 1480], [1205, 1360],
    [1280, 1345], [1340, 1320], [1375, 1290], [1345, 1240], [1368, 1190], [1385, 1130],
    [1380, 1060]
];

const stops = [
    [246, 251, 244], [217, 240, 212], [185, 226, 181],
    [143, 208, 154], [106, 184, 131], [76, 148, 103]
];

function inside(x, y) {
    let hit = false;
    for (let i = 0, j = region.length - 1; i < region.length; j = i++) {
        const [xi, yi] = region[i];
        const [xj, yj] = region[j];
        if ((yi > y) !== (yj > y) && x < ((xj - xi) * (y - yi)) / (yj - yi) + xi) {
            hit = !hit;
        }
    }
    return hit;
}

function shade(v) {
    const t = Math.max(0, Math.min(0.999, v)) * (stops.length - 1);
    const i = Math.floor(t);
    const f = t - i;
    const c = stops[i].map((s, k) => Math.round(s + (stops[i + 1][k] - s) * f));
    return `rgb(${c[0]},${c[1]},${c[2]})`;
}

function cover(x, y) {
    const axis = 1446 - 0.165 * (y - 1064);
    const d = x - axis;
    let v;

    if (y < 1340) {
        v = d < 0 ? 0.04 + (-d / 75) * 0.5 : 0.03 + (d / 110) * 0.28;
    } else {
        v = 0.18 + ((1440 - x) / 230) * 0.28;
    }
    if (x < 1405 && y < 1050) v = 0.72 + rand() * 0.25;
    else if (x >= 1405 && y < 1045) v = 0.25 + rand() * 0.2;
    else if (x > 1475 && x < 1520 && y > 1055 && y < 1088) v = 0.5 + rand() * 0.2;
    else if (x < 1400 && y > 1100 && y < 1165) v = 0.7 + rand() * 0.22;
    else v += (rand() - 0.5) * 0.28;

    if (y > 1340 && rand() < 0.1) v += 0.35;
    return v;
}

const ux = 0.89, uy = 0.45;
const vx = -0.45, vy = 0.89;
const cell = 16;

for (let i = -40; i < 40; i++) {
    for (let j = -40; j < 40; j++) {
        const cx = 1400 + i * cell * ux + j * cell * vx;
        const cy = 1250 + i * cell * uy + j * cell * vy;
        if (!inside(cx, cy)) continue;

        // some block groups are a good deal larger than the rest
        const big = rand() < 0.2 ? 1.9 : 1;
        const w = (cell / 2) * (0.9 + rand() * 0.6) * big;
        const h = (cell / 2) * (0.9 + rand() * 1.0) * big;
        const corners = [[-w, -h], [w, -h], [w, h], [-w, h]].map(([a, b]) => [
            cx + a * ux + b * vx + (rand() - 0.5) * 4,
            cy + a * uy + b * vy + (rand() - 0.5) * 4
        ]);

        const poly = document.createElementNS(SVG_NS, 'polygon');
        poly.setAttribute('points', pairsToString(corners));
        poly.setAttribute('fill', shade(cover(cx, cy)));
        mosaic.appendChild(poly);
    }
}

// the few block groups with almost no trees
const bare = [
    [[1433, 1051], [1460, 1055], [1455, 1100], [1428, 1096]],
    [[1464, 1220], [1491, 1226], [1485, 1252], [1458, 1246]],
    [[1380, 1372], [1420, 1378], [1412, 1404], [1372, 1398]]
];
bare.forEach((shape) => {
    const poly = document.createElementNS(SVG_NS, 'polygon');
    poly.setAttribute('points', pairsToString(shape));
    poly.setAttribute('fill', '#f8fcf7');
    mosaic.appendChild(poly);
});
```
